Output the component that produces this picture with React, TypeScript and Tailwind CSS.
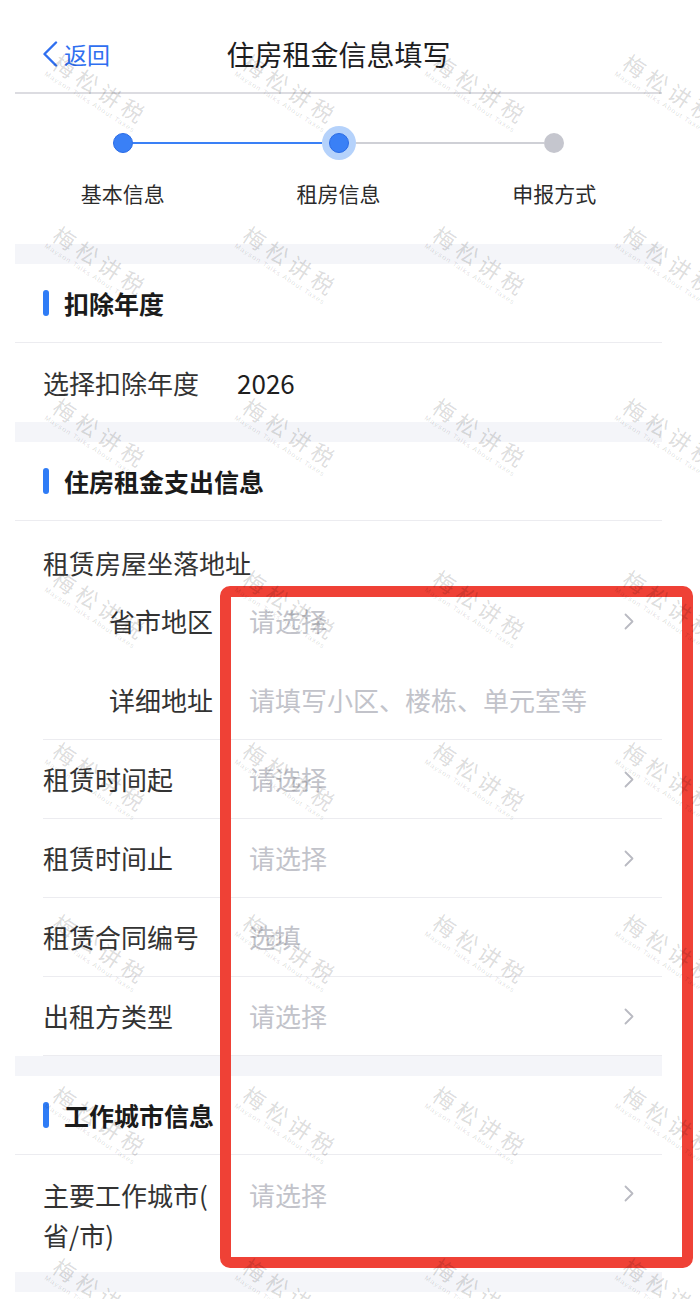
import React from "react";

const rows = [
	{ label: "租赁时间起", value: "请选择", arrow: true },
	{ label: "租赁时间止", value: "请选择", arrow: true },
	{ label: "租赁合同编号", value: "选填", arrow: false },
	{ label: "出租方类型", value: "请选择", arrow: true },
];

const Chevron = () => (
	<svg width="10" height="17" viewBox="0 0 10 17" fill="none">
		<path
			d="M1.5 1.5 8.5 8.5 1.5 15.5"
			stroke="#b9bac2"
			strokeWidth="1.8"
			strokeLinecap="round"
			strokeLinejoin="round"
		/>
	</svg>
);

const Band = () => <div className="h-[20px] bg-[#f4f5f9]" />;

const SectionTitle = ({ title }: { title: string }) => (
	<div className="flex h-[79px] items-center gap-[15px] border-b border-[#ececf0] pl-[28px]">
		<span className="h-[26px] w-[6px] rounded-full bg-[#2f7cf6]" />
		<span className="text-[25px] font-bold leading-[34px] text-[#1b1b1b]">{title}</span>
	</div>
);

const Watermarks = () => {
	const marks: { x: number; y: number }[] = [];
	for (let r = 0; r < 8; r++) {
		for (let c = 0; c < 4; c++) {
			marks.push({ x: 97 + c * 190, y: 91 + r * 172 });
		}
	}
	return (
		<div className="pointer-events-none absolute inset-0 z-20 overflow-hidden">
			{marks.map((m) => (
				<div
					key={`${m.x}-${m.y}`}
					className="absolute flex -translate-x-1/2 -translate-y-1/2 rotate-[33deg] flex-col items-center whitespace-nowrap"
					style={{ left: m.x, top: m.y }}
				>
					<span className="pl-[5px] text-[22px] leading-[26px] tracking-[5px] text-black/15">梅松讲税</span>
					<span className="font-['Liberation_Sans',sans-serif] text-[7px] leading-[9px] tracking-[1px] text-black/15">
						Mayson Talks About Taxes
					</span>
				</div>
			))}
		</div>
	);
};

export default function App() {
	return (
		<div className="relative h-[1299px] w-[700px] overflow-hidden bg-white font-['Noto_Sans_CJK_SC','Noto_Sans',sans-serif]">
			<div className="ml-[15px] w-[647px]">
				{/* header */}
				<div className="grid h-[94px] grid-cols-[1fr_auto_1fr] items-center border-b-2 border-[#dcdce1] pt-[16px]">
					<div className="flex items-center gap-[6px] pl-[27px] text-[#2f6ff0]">
						<svg width="16" height="26" viewBox="0 0 16 26" fill="none">
							<path
								d="M14 1.5 2.5 13 14 24.5"
								stroke="#2f6ff0"
								strokeWidth="2.4"
								strokeLinecap="round"
								strokeLinejoin="round"
							/>
						</svg>
						<span className="text-[23px] leading-[30px]">返回</span>
					</div>
					<div className="text-[28px] leading-[36px] text-[#1d1d1f]">住房租金信息填写</div>
					<div />
				</div>

				{/* steps */}
				<div className="grid grid-cols-3 pt-[32px] pb-[36px]">
					<div className="flex flex-col items-center">
						<div className="flex h-[34px] w-full items-center">
							<div className="flex-1" />
							<span className="size-[20px] rounded-full border border-[#2a6be6] bg-[#3a80f6]" />
							<div className="h-[2px] flex-1 bg-[#3a80f6]" />
						</div>
						<span className="mt-[18px] text-[21px] leading-[30px] text-[#2b2b2b]">基本信息</span>
					</div>
					<div className="flex flex-col items-center">
						<div className="flex h-[34px] w-full items-center">
							<div className="h-[2px] flex-1 bg-[#3a80f6]" />
							<span className="flex size-[34px] items-center justify-center rounded-full bg-[#b5d2fb]">
								<span className="size-[20px] rounded-full border border-[#2a6be6] bg-[#3a80f6]" />
							</span>
							<div className="h-[2px] flex-1 bg-[#cfd0d6]" />
						</div>
						<span className="mt-[18px] text-[21px] leading-[30px] text-[#2b2b2b]">租房信息</span>
					</div>
					<div className="flex flex-col items-center">
						<div className="flex h-[34px] w-full items-center">
							<div className="h-[2px] flex-1 bg-[#cfd0d6]" />
							<span className="size-[20px] rounded-full bg-[#c5c6ce]" />
							<div className="flex-1" />
						</div>
						<span className="mt-[18px] text-[21px] leading-[30px] text-[#2b2b2b]">申报方式</span>
					</div>
				</div>

				<Band />
				<SectionTitle title="扣除年度" />
				<div className="flex h-[79px] items-center gap-[38px] pl-[28px] text-[26px] leading-[36px]">
					<span className="text-[#333]">选择扣除年度</span>
					<span className="text-[#1e1e1e]">2026</span>
				</div>

				<Band />
				<SectionTitle title="住房租金支出信息" />
				<div className="ml-[28px] border-b border-[#ececf0] pr-[28px] text-[26px] leading-[36px]">
					<div className="h-[60px] pt-[24px] text-[#333]">租赁房屋坐落地址</div>
					<div className="flex h-[80px] items-center">
						<span className="w-[170px] text-right text-[#333]">省市地区</span>
						<span className="ml-[36px] flex-1 text-[#c2c3ca]">请选择</span>
						<Chevron />
					</div>
					<div className="flex h-[78px] items-center">
						<span className="w-[170px] text-right text-[#333]">详细地址</span>
						<span className="ml-[36px] flex-1 text-[#c2c3ca]">请填写小区、楼栋、单元室等</span>
					</div>
				</div>
				{rows.map((row) => (
					<div
						key={row.label}
						className="ml-[28px] flex h-[79px] items-center border-b border-[#ececf0] pr-[28px] text-[26px] leading-[36px]"
					>
						<span className="w-[170px] text-[#333]">{row.label}</span>
						<span className="ml-[36px] flex-1 text-[#c2c3ca]">{row.value}</span>
						{row.arrow && <Chevron />}
					</div>
				))}

				<Band />
				<SectionTitle title="工作城市信息" />
				<div className="flex items-start pt-[20px] pb-[17px] pl-[28px] pr-[28px] text-[26px] leading-[40px]">
					<span className="w-[170px] text-[#333]">
						主要工作城市(
						<br />
						省/市)
					</span>
					<span className="ml-[36px] flex-1 text-[#c2c3ca]">请选择</span>
					<span className="flex h-[40px] items-center pb-[4px]">
						<Chevron />
					</span>
				</div>
				<Band />
			</div>

			{/* annotation box */}
			<div className="absolute top-[586px] left-[220px] z-10 h-[682px] w-[473px] rounded-[10px] border-[11px] border-[#ef4136]" />

			<Watermarks />
		</div>
	);
}
